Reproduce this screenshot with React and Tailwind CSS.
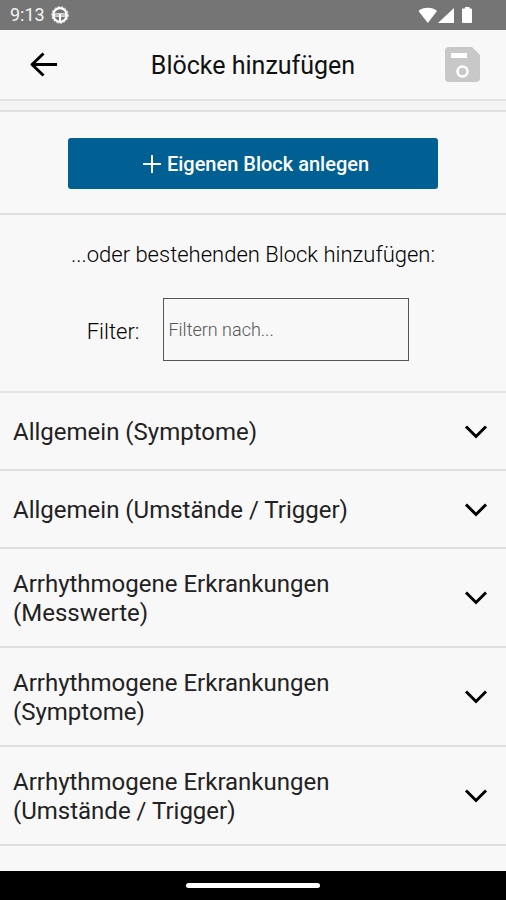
import React, { useState } from 'react';

const blocks = [
  'Allgemein (Symptome)',
  'Allgemein (Umstände / Trigger)',
  'Arrhythmogene Erkrankungen (Messwerte)',
  'Arrhythmogene Erkrankungen (Symptome)',
  'Arrhythmogene Erkrankungen (Umstände / Trigger)',
];

const StatusBar = () => (
  <div className="flex h-[30px] items-center justify-between bg-[#757575] pl-[10px] pr-8 text-white">
    <div className="flex items-center gap-1.5">
      <span className="text-lg leading-none text-gray-100">9:13</span>
      <svg viewBox="0 0 18 18" className="h-[18px] w-[18px]" fill="none" stroke="currentColor">
        <circle cx="9" cy="9" r="6.800" strokeWidth="2.200" />
        <circle cx="9" cy="9" r="8.200" strokeWidth="1" strokeDasharray="2 1.600" />
        <path d="M2.500 9h13" strokeWidth="3.400" />
        <path d="M9 10v5" strokeWidth="2" />
        <path d="M4 9h4M10 9h4" stroke="#757575" strokeWidth="0.900" />
      </svg>
    </div>
    <div className="flex items-center">
      <svg viewBox="0 0 56 18" className="h-[18px] w-14" fill="currentColor">
        <path d="M0.500 5C5 .8 14.500.8 19 5L9.800 17z" />
        <path d="M36 2v15H20z" />
        <path d="M47 1h4.500v1.500h1.500a1 1 0 0 1 1 1V16a1 1 0 0 1-1 1h-8a1 1 0 0 1-1-1V3.500a1 1 0 0 1 1-1h2z" />
      </svg>
    </div>
  </div>
);

const Header = () => (
  <header className="grid h-[71px] grid-cols-[1fr_auto_1fr] items-center border-b-2 border-[#e2e2e2] px-[26px]">
    <button type="button" aria-label="Zurück" className="justify-self-start">
      <svg viewBox="0 0 34 34" className="h-[34px] w-[34px]" fill="none" stroke="#000" strokeWidth="3">
        <path d="M31 16.500H6M17.500 5.500L6 16.500l11.500 11" strokeLinejoin="round" />
      </svg>
    </button>
    <h1 className="pt-0.5 text-[25px] text-[#111]">Blöcke hinzufügen</h1>
    <button type="button" aria-label="Speichern" disabled className="justify-self-end">
      <svg viewBox="0 0 35 35" className="h-[35px] w-[35px]">
        <path d="M4 0h23l8 8v23a4 4 0 0 1-4 4H4a4 4 0 0 1-4-4V4a4 4 0 0 1 4-4z" fill="#c8c8c8" />
        <path d="M6 6h16v5H6z" fill="#fff" />
        <circle cx="17.500" cy="24.500" r="5" fill="none" stroke="#fff" strokeWidth="2.500" />
      </svg>
    </button>
  </header>
);

const BlockRow = ({ title }) => (
  <li className="border-b-2 border-[#dedede]">
    <button type="button" className="flex min-h-[76px] w-full items-center justify-between pt-[21px] pb-[18px] pl-[13px] pr-[18px] text-left">
      <span className="max-w-[360px] text-2xl leading-[29px]">{title}</span>
      <svg viewBox="0 0 24 16" className="h-4 w-6 shrink-0" fill="none" stroke="#000" strokeWidth="3">
        <path d="M2 1.500l10 10 10-10" />
      </svg>
    </button>
  </li>
);

export default function App() {
  const [filter, setFilter] = useState('');
  const visible = blocks.filter((b) => b.toLowerCase().includes(filter.toLowerCase()));

  return (
    <div className="flex min-h-screen flex-col bg-[#f8f8f8] font-[Roboto,sans-serif] text-[#222]">
      <StatusBar />
      <Header />

      <main className="flex-1">
        <div className="h-[11px] border-b-2 border-[#e0e0e0] bg-[#f4f4f4]" />

        {/* Own block */}
        <section className="border-b-2 border-[#e0e0e0] px-[68px] pt-[26px] pb-6">
          <button
            type="button"
            className="flex h-[51px] w-full items-center justify-center gap-1.5 rounded-[3px] bg-[#005f93] pl-1.5 text-xl font-medium text-white"
          >
            <svg viewBox="0 0 18 18" className="h-[18px] w-[18px]" stroke="currentColor" strokeWidth="2">
              <path d="M9 0v18M0 9h18" />
            </svg>
            Eigenen Block anlegen
          </button>
        </section>

        {/* Existing blocks */}
        <section className="border-b-2 border-[#e4e4e4] px-4 pt-6 pb-[30px]">
          <p className="text-center text-[22px] font-light leading-8 text-black">...oder bestehenden Block hinzufügen:</p>
          <div className="mt-[27px] flex items-center justify-center gap-6 pr-2.5">
            <label htmlFor="filter" className="pt-1 text-[22px] font-light text-black">Filter:</label>
            <input
              id="filter"
              type="text"
              value={filter}
              onChange={(e) => setFilter(e.target.value)}
              placeholder="Filtern nach..."
              className="h-[63px] w-[53%] border border-[#555] px-1 text-lg font-light placeholder:text-[#555]"
            />
          </div>
        </section>

        <ul>
          {visible.map((title) => (
            <BlockRow key={title} title={title} />
          ))}
        </ul>
      </main>

      <div className="flex h-[29px] items-center justify-center bg-black">
        <div className="h-[5px] w-[134px] rounded-full bg-white" />
      </div>
    </div>
  );
}
